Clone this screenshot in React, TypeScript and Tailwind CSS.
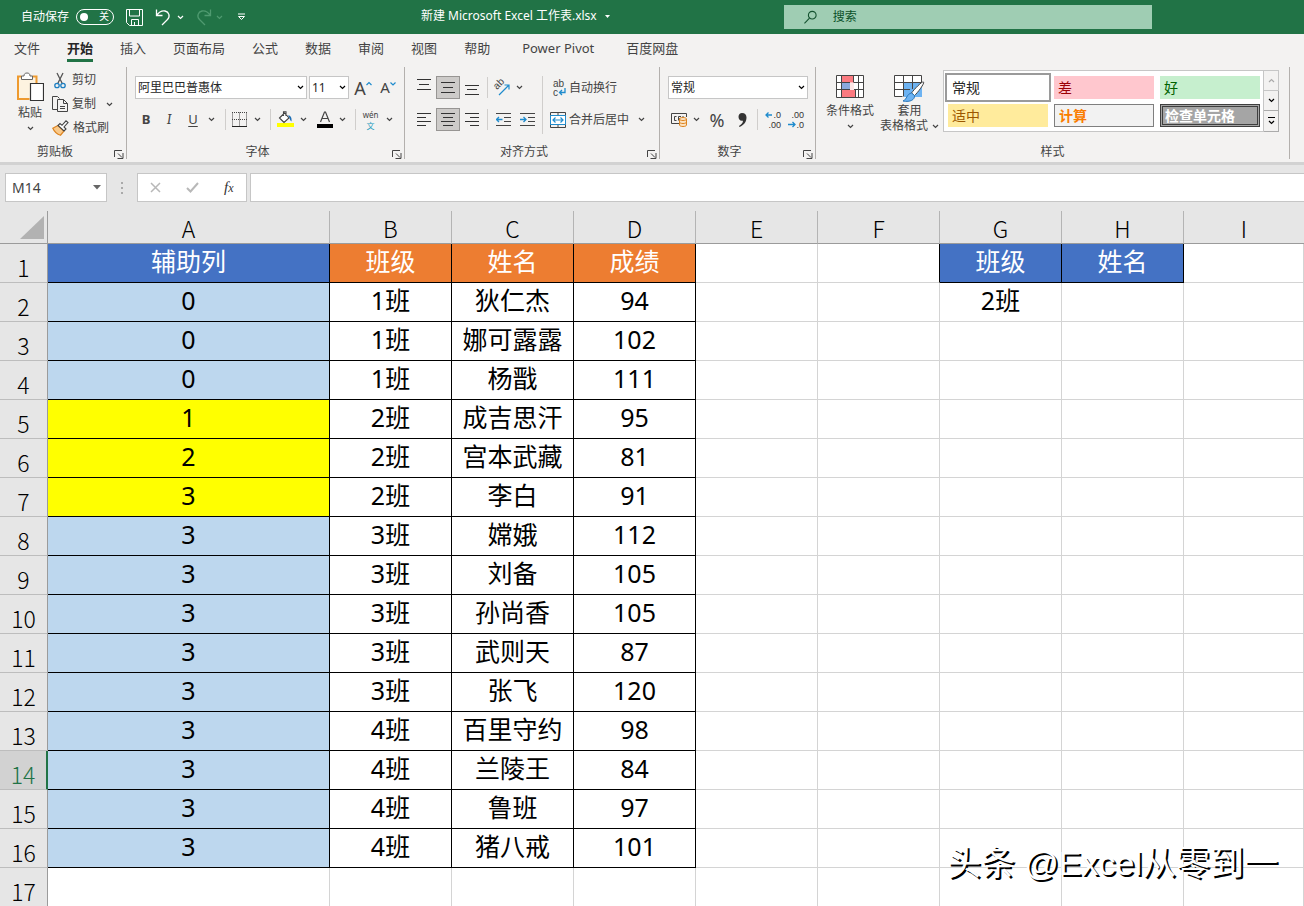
import type { ReactNode } from "react";

type CellStyle = "blue" | "orange" | "light" | "yellow" | "boxed" | "plain";

const COLUMNS = ["A", "B", "C", "D", "E", "F", "G", "H", "I"];

const TABS = [
	"文件",
	"开始",
	"插入",
	"页面布局",
	"公式",
	"数据",
	"审阅",
	"视图",
	"帮助",
	"Power Pivot",
	"百度网盘",
];

const RECORDS: [number, string, string, number][] = [
	[0, "1班", "狄仁杰", 94],
	[0, "1班", "娜可露露", 102],
	[0, "1班", "杨戬", 111],
	[1, "2班", "成吉思汗", 95],
	[2, "2班", "宫本武藏", 81],
	[3, "2班", "李白", 91],
	[3, "3班", "嫦娥", 112],
	[3, "3班", "刘备", 105],
	[3, "3班", "孙尚香", 105],
	[3, "3班", "武则天", 87],
	[3, "3班", "张飞", 120],
	[3, "4班", "百里守约", 98],
	[3, "4班", "兰陵王", 84],
	[3, "4班", "鲁班", 97],
	[3, "4班", "猪八戒", 101],
];

const CELL_CLASSES: Record<CellStyle, string> = {
	blue: "border-black bg-[#4472c4] text-white",
	orange: "border-black bg-[#ed7d31] text-white",
	light: "border-black bg-[#bdd7ee]",
	yellow: "border-black bg-[#ffff00]",
	boxed: "border-black",
	plain: "border-[#d4d4d4]",
};

function Chevron({ className = "text-[#444]" }: { className?: string }) {
	return (
		<svg width="7" height="5" viewBox="0 0 7 5" fill="none" className={className} aria-hidden="true">
			<path d="M1 1l2.5 2.5L6 1" stroke="currentColor" strokeWidth="1.2" />
		</svg>
	);
}

function Tool({
	label,
	className,
	children,
}: {
	label: string;
	className: string;
	children: ReactNode;
}) {
	return (
		<button
			type="button"
			aria-label={label}
			className={`flex h-[23px] shrink-0 items-center justify-center ${className}`}
		>
			{children}
		</button>
	);
}

function Divider({ className = "h-[21px]" }: { className?: string }) {
	return <span className={`w-px shrink-0 bg-[#d0cecc] ${className}`} />;
}

function Combo({ label, value, className }: { label: string; value: string; className: string }) {
	return (
		<span className={`relative h-[23px] ${className}`}>
			<select
				aria-label={label}
				defaultValue={value}
				className="block h-full w-full appearance-none border border-[#c6c6c6] bg-white px-0.5 text-xs text-[#262626]"
			>
				<option>{value}</option>
			</select>
			<span className="pointer-events-none absolute inset-y-0 right-[3px] flex items-center">
				<Chevron className="text-black" />
			</span>
		</span>
	);
}

function Group({
	title,
	className,
	launcher = true,
	children,
}: {
	title: string;
	className: string;
	launcher?: boolean;
	children: ReactNode;
}) {
	return (
		<section className={`flex h-[92px] shrink-0 flex-col border-r border-[#b3b0ad] ${className}`}>
			<div className="h-[77px]">{children}</div>
			<div className="relative flex h-[15px] items-center justify-center text-xs">
				<span className={launcher ? "pr-4" : ""}>{title}</span>
				{launcher && (
					<button type="button" aria-label={`${title}设置`} className="absolute right-0.5 bottom-0">
						<svg width="10" height="10" viewBox="0 0 10 10" fill="none" stroke="#444">
							<path d="M.5 8V1.500H8M4 4.500l4 4M9 4v5.500H3.500" />
						</svg>
					</button>
				)}
			</div>
		</section>
	);
}

// Ruled lines; the short ones are placed by `kind`
function AlignIcon({ kind }: { kind: "top" | "middle" | "bottom" | "left" | "center" | "right" }) {
	const paths = {
		top: "M0 .500h14M2 5.500h10M0 10.500h14",
		middle: "M0 3.500h14M2 8.500h10M0 13.500h14",
		bottom: "M0 6.500h14M2 10.500h10M0 15.500h14",
		left: "M0 2.500h14M0 6.500h9M0 10.500h14M0 14.500h9",
		center: "M0 2.500h14M2 6.500h10M0 10.500h14M2 14.500h10",
		right: "M0 2.500h14M5 6.500h9M0 10.500h14M5 14.500h9",
	};
	return (
		<svg width="14" height="17" viewBox="0 0 14 17" stroke="#333" fill="none">
			<path d={paths[kind]} />
		</svg>
	);
}

function IndentIcon({ increase }: { increase?: boolean }) {
	return (
		<svg width="15" height="15" viewBox="0 0 15 15" fill="none">
			<path d="M0 1.500h15M8 5.500h7M8 9.500h7M0 13.500h15" stroke="#444" />
			<path
				d={increase ? "M0 7.500h6M3.500 5L6 7.500 3.500 10" : "M.5 7.500h6M3 5L.5 7.500 3 10"}
				stroke="#1e8bcd"
				strokeWidth="1.300"
			/>
		</svg>
	);
}

function DecimalIcon({ increase }: { increase?: boolean }) {
	return (
		<svg width="17" height="18" viewBox="0 0 17 18" className="overflow-visible">
			<g fill="#333" fontFamily="Liberation Sans" fontSize="9">
				<text x="16" y="7" textAnchor="end">
					{increase ? ".0" : ".00"}
				</text>
				<text x="16" y="17" textAnchor="end">
					{increase ? ".00" : ".0"}
				</text>
			</g>
			<path
				d={increase ? "M7 4H1M3.500 1.500L1 4l2.500 2.500" : "M0 13.500h7M4.500 11L7 13.500 4.500 16"}
				stroke="#1e8bcd"
				strokeWidth="1.300"
				fill="none"
			/>
		</svg>
	);
}

function TitleBar() {
	return (
		<header className="flex h-[34px] items-center bg-[#217346] text-xs text-white">
			<div className="flex flex-1 items-center pl-[21px]">
				<label className="flex items-center gap-[7px]">
					自动保存
					<span className="flex h-4 w-[38px] items-center justify-between rounded-full border border-white pr-1 pl-[3px] text-[10px]">
						<input type="checkbox" className="h-2 w-2 appearance-none rounded-full bg-white" />
						关
					</span>
				</label>
				<button type="button" aria-label="保存" className="ml-3">
					<svg width="17" height="17" viewBox="0 0 17 17" fill="none" stroke="#fff">
						<path d="M.5.5h16v16h-13l-3-3zM3.500.5v6.500h10V.5M5.500 16.500v-6h7v6M8.500 13v3.500" />
					</svg>
				</button>
				<button type="button" aria-label="撤消" className="ml-3 flex items-center gap-[6px]">
					<svg width="16" height="18" viewBox="0 0 16 18" fill="none" stroke="#fff" strokeWidth="1.300">
						<path d="M1.500 1.500v6h6M1.500 7.500C4 4 7 2.500 10 3c4 .8 5.500 5.500 2.500 8.500L7 17" />
					</svg>
					<Chevron className="text-white" />
				</button>
				<button type="button" aria-label="恢复" className="ml-3 flex items-center gap-1">
					<svg width="16" height="18" viewBox="0 0 16 18" fill="none" stroke="#4f9a70" strokeWidth="1.300">
						<path d="M14.500 1.500v6h-6M14.500 7.500C12 4 9 2.500 6 3 2 3.800.5 8.500 3.500 11.500L9 17" />
					</svg>
					<Chevron className="text-[#4f9a70]" />
				</button>
				<button type="button" aria-label="自定义快速访问工具栏" className="ml-[14px]">
					<svg width="9" height="8" viewBox="0 0 9 8" fill="none" stroke="#fff">
						<path d="M1 1h7M1.500 3.500h6l-3 3z" />
					</svg>
				</button>
			</div>
			<div className="flex w-[363px] items-center gap-2 pb-0.5">
				<h1>新建 Microsoft Excel 工作表.xlsx</h1>
				<svg width="5" height="3" viewBox="0 0 5 3" fill="#fff" aria-hidden="true">
					<path d="M0 0h5L2.500 3z" />
				</svg>
			</div>
			<label className="mr-[152px] flex h-6 w-[368px] items-center gap-4 bg-[#9fcdb3] pl-5">
				<svg width="14" height="15" viewBox="0 0 14 15" fill="none" stroke="#14522f" strokeWidth="1.200">
					<circle cx="9" cy="5" r="4.200" />
					<path d="M6 8.200L.5 14" />
				</svg>
				<input
					type="search"
					aria-label="搜索"
					placeholder="搜索"
					className="w-full bg-transparent outline-none placeholder:text-[#0b5129]"
				/>
			</label>
		</header>
	);
}

function TabBar() {
	return (
		<nav className="flex h-[33px] gap-[27px] pl-[14px] text-[13px]">
			{TABS.map((tab) => (
				<button
					key={tab}
					type="button"
					className={`h-7 border-b-3 pt-1 whitespace-nowrap ${
						tab === "开始" ? "border-[#217346] font-bold text-[#262626]" : "border-transparent"
					} ${tab === "Power Pivot" ? "px-[5px]" : ""}`}
				>
					{tab}
				</button>
			))}
		</nav>
	);
}

function ClipboardGroup() {
	return (
		<Group title="剪贴板" className="w-[127px]">
			<div className="flex pt-px">
				<button type="button" className="flex w-[52px] flex-col items-center pt-1 pl-2 text-xs">
					<svg width="28" height="32" viewBox="0 0 28 32" fill="none">
						<path d="M3 6h18v7h-6v14H3z" fill="#fdf3e0" />
						<path d="M5.500 4.500H2v22.500h11.500M16.500 4.500h4V11" stroke="#ee9a2f" strokeWidth="2" />
						<path d="M5.500 7.500V4H8C8 2 9 1 11 1s3 1 3 3h2.500v3.500z" fill="#fff" stroke="#666" />
						<path d="M14.500 11.500h13v17h-13z" fill="#fff" stroke="#333" strokeWidth="1.200" />
					</svg>
					<span className="leading-[18px]">粘贴</span>
					<span className="pt-1">
						<Chevron />
					</span>
				</button>
				<div className="text-xs">
					<button type="button" className="flex h-6 items-center gap-1">
						<svg width="16" height="17" viewBox="0 0 16 17" fill="none">
							<path d="M5 1l5.500 11M11 1L5.500 12" stroke="#555" strokeWidth="1.300" />
							<circle cx="5" cy="13.500" r="2.200" stroke="#1e7fc2" strokeWidth="1.300" />
							<circle cx="11" cy="13.500" r="2.200" stroke="#1e7fc2" strokeWidth="1.300" />
						</svg>
						剪切
					</button>
					<button type="button" className="flex h-6 items-center gap-1">
						<svg width="16" height="16" viewBox="0 0 16 16" fill="none" stroke="#444">
							<path d="M5 13.500H.5V.5h5l2 2M5.500 3.500h6l4 4v8h-10zM11.500 3.500v4h4M8 10.500h5M8 12.500h5" />
						</svg>
						复制
						<span className="pl-1.5">
							<Chevron />
						</span>
					</button>
					<button type="button" className="flex h-6 items-center gap-1">
						<svg width="17" height="16" viewBox="0 0 17 16" fill="none">
							<path
								d="M.8 8.200L6 5.500l6 5.500-3.500 4.200C4.500 14 2.500 12 .8 8.200z"
								fill="#f9c98a"
								stroke="#dd8420"
								strokeWidth="1.200"
							/>
							<path
								d="M6 5.500L8 3.500l2 1.800 4-4.500L16 2.500 12 7l2 2-2 2z"
								fill="#fff"
								stroke="#444"
								strokeWidth="1.100"
							/>
						</svg>
						格式刷
					</button>
				</div>
			</div>
		</Group>
	);
}

function FontGroup() {
	return (
		<Group title="字体" className="w-[278px]">
			<div className="flex flex-col gap-[9px] pt-[9px] pl-2">
				<div className="flex">
					<Combo label="字体" value="阿里巴巴普惠体" className="w-[172px]" />
					<Combo label="字号" value="11" className="ml-0.5 w-10" />
					<Tool label="增大字号" className="w-7 text-lg">
						A
						<svg width="6" height="14" viewBox="0 0 6 14" fill="none" stroke="#1e8bcd" strokeWidth="1.200">
							<path d="M.5 4L3 1.500 5.500 4" />
						</svg>
					</Tool>
					<Tool label="减小字号" className="w-[22px] text-[15px]">
						A
						<svg width="6" height="14" viewBox="0 0 6 14" fill="none" stroke="#1e8bcd" strokeWidth="1.200">
							<path d="M.5 1.500L3 4l2.500-2.500" />
						</svg>
					</Tool>
				</div>
				<div className="flex items-center">
					<Tool label="加粗" className="w-[22px] text-[13px] font-bold">
						B
					</Tool>
					<Tool label="倾斜" className="w-6 font-serif text-sm italic">
						I
					</Tool>
					<Tool label="下划线" className="w-6 text-[13px] underline underline-offset-2">
						U
					</Tool>
					<Tool label="下划线选项" className="w-3">
						<Chevron />
					</Tool>
					<span className="w-2" />
					<Divider />
					<Tool label="边框" className="w-[27px]">
						<svg width="16" height="16" viewBox="0 0 16 16" fill="none">
							<path
								d="M.5.5v13M7.500.5v13M14.500.5v13M0 .5h15M0 7.500h15"
								stroke="#444"
								strokeDasharray="1 1"
							/>
							<path d="M0 14.500h15" stroke="#222" />
						</svg>
					</Tool>
					<Tool label="边框选项" className="w-2">
						<Chevron />
					</Tool>
					<span className="w-[9px]" />
					<Divider />
					<Tool label="填充颜色" className="w-7">
						<svg width="17" height="17" viewBox="0 0 17 17" fill="none">
							<path d="M0 12h17v4H0z" fill="#ff0" />
							<path
								d="M2.500 7L7.500 2l4.500 5-5 4.500zM6.500 5V.800h2.500V5"
								fill="#fff"
								stroke="#444"
								strokeWidth="1.100"
							/>
							<path d="M11 4.500c2.500-.5 4 2 3.500 6-1.200-1-1.700-2-2-3.500z" fill="#1e6fb5" />
						</svg>
					</Tool>
					<Tool label="填充颜色选项" className="w-2">
						<Chevron />
					</Tool>
					<span className="w-1" />
					<Tool label="字体颜色" className="w-[27px]">
						<svg width="16" height="18" viewBox="0 0 16 18">
							<path
								d="M3.500 11L7.500 1h1l4 10M5 7.500h6"
								fill="none"
								stroke="#444"
								strokeWidth="1.200"
							/>
							<path d="M0 13h16v4H0z" fill="#000" />
						</svg>
					</Tool>
					<Tool label="字体颜色选项" className="w-2">
						<Chevron />
					</Tool>
					<span className="w-[9px]" />
					<Divider />
					<Tool label="拼音" className="w-[29px] flex-col">
						<span className="text-[8px] leading-[11px]">wén</span>
						<span className="text-[8px] leading-[11px] text-[#1e9bbd]">文</span>
					</Tool>
					<Tool label="拼音选项" className="w-2">
						<Chevron />
					</Tool>
				</div>
			</div>
		</Group>
	);
}

function AlignmentGroup() {
	return (
		<Group title="对齐方式" className="w-[255px]">
			<div className="flex items-start pt-[9px] pl-[7px]">
				<div className="flex flex-col gap-[9px]">
					<div className="flex items-center">
						<Tool label="顶端对齐" className="w-6">
							<AlignIcon kind="top" />
						</Tool>
						<Tool label="垂直居中" className="w-6 border border-[#979593] bg-[#cdcbc9]">
							<AlignIcon kind="middle" />
						</Tool>
						<Tool label="底端对齐" className="w-6">
							<AlignIcon kind="bottom" />
						</Tool>
						<span className="w-[3px]" />
						<Divider />
						<Tool label="方向" className="w-7">
							<svg width="18" height="17" viewBox="0 0 18 17" fill="none" className="overflow-visible">
								<text
									transform="translate(4 11) rotate(-45)"
									fill="#444"
									fontFamily="Liberation Sans"
									fontSize="10"
								>
									ab
								</text>
								<path d="M6 16L16 6M11.500 6H16v4.500" stroke="#1e8bcd" strokeWidth="1.200" />
							</svg>
						</Tool>
						<Chevron />
					</div>
					<div className="flex items-center">
						<Tool label="左对齐" className="w-6">
							<AlignIcon kind="left" />
						</Tool>
						<Tool label="居中" className="w-6 border border-[#979593] bg-[#cdcbc9]">
							<AlignIcon kind="center" />
						</Tool>
						<Tool label="右对齐" className="w-6">
							<AlignIcon kind="right" />
						</Tool>
						<span className="w-[3px]" />
						<Divider />
						<Tool label="减少缩进量" className="w-[30px]">
							<IndentIcon />
						</Tool>
						<Tool label="增加缩进量" className="w-[18px]">
							<IndentIcon increase />
						</Tool>
					</div>
				</div>
				<Divider className="ml-auto h-[58px]" />
				<div className="flex w-[116px] flex-col gap-[9px] pl-[7px] text-xs">
					<button type="button" className="flex h-[23px] items-center gap-[3px]">
						<svg width="16" height="18" viewBox="0 0 16 18" fill="none" className="overflow-visible">
							<g fill="#444" fontFamily="Liberation Sans" fontSize="10">
								<text x="3" y="8">
									ab
								</text>
								<text x="3" y="17">
									c
								</text>
							</g>
							<path d="M15 9v4.500H9.500M12 11l-2.500 2.500L12 16" stroke="#1e8bcd" strokeWidth="1.300" />
						</svg>
						自动换行
					</button>
					<button type="button" className="flex h-[23px] items-center gap-[3px] whitespace-nowrap">
						<svg width="16" height="16" viewBox="0 0 16 16" fill="none">
							<path d="M.5.500h15v15H.5zM8 .5V4M8 12v3.500" stroke="#444" />
							<path d="M.5 3.500h15v9H.5z" fill="#fff" stroke="#1e8bcd" />
							<path
								d="M3 8h10M5.500 5.500L3 8l2.500 2.500M10.500 5.500L13 8l-2.500 2.500"
								stroke="#1e8bcd"
								strokeWidth="1.200"
							/>
						</svg>
						合并后居中
						<span className="pl-1.5">
							<Chevron />
						</span>
					</button>
				</div>
			</div>
		</Group>
	);
}

function NumberGroup() {
	return (
		<Group title="数字" className="w-[156px]">
			<div className="flex flex-col gap-[9px] pt-[9px] pl-2">
				<Combo label="数字格式" value="常规" className="w-[140px]" />
				<div className="flex items-center">
					<Tool label="会计数字格式" className="w-[23px]">
						<svg width="17" height="15" viewBox="0 0 17 15" fill="none">
							<path d="M8 11.500H.5v-10h15V5" stroke="#444" />
							<path d="M5.500 4.500h-2v4h2M10 4.500H7.500v4M7.500 6.500h2M12 4v3" stroke="#444" />
							<path
								d="M8.500 7v6c0 2 7 2 7 0V7c0-2-7-2-7 0c0 2 7 2 7 0M8.500 10c0 2 7 2 7 0"
								fill="#fbe3c4"
								stroke="#dd8420"
							/>
						</svg>
					</Tool>
					<Tool label="会计数字格式选项" className="w-2.5">
						<Chevron />
					</Tool>
					<Tool label="百分比样式" className="w-8 text-lg">
						%
					</Tool>
					<Tool label="千位分隔样式" className="w-[18px]">
						<svg width="9" height="14" viewBox="0 0 9 14" fill="#333">
							<path d="M4 0c3 0 4.500 2 4.500 4.500C8.500 9 6 12 1.500 14L1 13c2.500-1.500 4-3.500 4-5.300C2 8.300.5 6.300.5 3.800.5 1.600 2 0 4 0z" />
						</svg>
					</Tool>
					<span className="w-1.5" />
					<Divider />
					<Tool label="增加小数位数" className="w-[30px]">
						<DecimalIcon increase />
					</Tool>
					<Tool label="减少小数位数" className="w-[17px]">
						<DecimalIcon />
					</Tool>
				</div>
			</div>
		</Group>
	);
}

function StylesGroup() {
	return (
		<Group title="样式" className="w-[474px]" launcher={false}>
			<div className="flex pt-[3px]">
				<button type="button" className="flex w-16 flex-col items-center pt-[5px] pl-1 text-xs">
					<svg width="28" height="23" viewBox="0 0 28 23" fill="none">
						<path d="M.5.5h27v22H.5z" fill="#fff" />
						<path d="M6 .5h12v7H6zM6 15h14v7.500H6z" fill="#fb7a80" />
						<path d="M6 8h8v7H6z" fill="#8aa9dc" />
						<path d="M14 8h4v7h-4z" fill="#fde6e6" />
						<path
							d="M.5.5h27v22H.5zM5.500.5v22M17.500.5v7M19.500 15v7.500M22.500.5v22M0 7.500h14M18 7.500h10M0 14.500h14M18 14.500h10"
							stroke="#444"
						/>
					</svg>
					<span className="pt-1 leading-[18px] whitespace-nowrap">条件格式</span>
					<span className="pt-1">
						<Chevron />
					</span>
				</button>
				<button type="button" className="flex w-[63px] flex-col items-center pt-[5px] pr-1 text-xs">
					<svg width="31" height="27" viewBox="0 0 31 27" fill="none">
						<path d="M.5.5h27v21H.5z" fill="#fff" />
						<path d="M10 8h18v14H10z" fill="#6db3f2" />
						<path d="M27.500 8V.500H.5v21h8M9.500.5v21M18.500.5V14M0 7.500h28M0 14.500h16" stroke="#444" />
						<path
							d="M29.500 7c1.500 1-6 11-9 13.500L17.500 18C20 14.500 28 6 29.500 7z"
							fill="#fff"
							stroke="#444"
						/>
						<path
							d="M17.500 18l3 2.500c.5 4-4 7-11.500 5.500 4-1.500 3.500-7 8.500-8z"
							fill="#6db3f2"
							stroke="#2a76b8"
						/>
					</svg>
					<span className="leading-[18px]">套用</span>
					<span className="flex items-center gap-1 leading-3 whitespace-nowrap">
						表格格式
						<Chevron />
					</span>
				</button>
				<div className="flex">
					<div className="grid h-[62px] w-[321px] grid-cols-[100px_100px_100px] grid-rows-[23px_23px] gap-x-1.5 gap-y-[5px] border border-[#c6c6c6] bg-white pt-[5px] pl-1 text-sm leading-[22px]">
						<button
							type="button"
							className="bg-white pl-1 text-left text-[#262626] outline-2 outline-offset-1 outline-[#9a9a9a]"
						>
							常规
						</button>
						<button type="button" className="bg-[#ffc7ce] pl-1 text-left text-[#9c0006]">
							差
						</button>
						<button type="button" className="bg-[#c6efce] pl-1 text-left text-[#006100]">
							好
						</button>
						<button type="button" className="bg-[#ffeb9c] pl-1 text-left text-[#9c5700]">
							适中
						</button>
						<button
							type="button"
							className="border border-[#7f7f7f] bg-[#f2f2f2] pl-1 text-left leading-5 font-bold text-[#fa7d00]"
						>
							计算
						</button>
						<button
							type="button"
							className="border-3 border-double border-[#3f3f3f] bg-[#a5a5a5] pl-0.5 text-left leading-4 font-bold text-white"
						>
							检查单元格
						</button>
					</div>
					<div className="flex w-[15px] flex-col">
						<button
							type="button"
							aria-label="上一行"
							className="flex h-[21px] items-center justify-center border border-l-0 border-[#c6c6c6]"
						>
							<span className="rotate-180">
								<Chevron className="text-[#aaa]" />
							</span>
						</button>
						<button
							type="button"
							aria-label="下一行"
							className="flex h-5 items-center justify-center border-r border-b border-[#ababab]"
						>
							<Chevron className="text-black" />
						</button>
						<button
							type="button"
							aria-label="其他样式"
							className="flex h-[21px] flex-col items-center justify-center gap-0.5 border-r border-b border-[#ababab]"
						>
							<span className="h-px w-[7px] bg-black" />
							<Chevron className="text-black" />
						</button>
					</div>
				</div>
			</div>
		</Group>
	);
}

function FormulaBar() {
	return (
		<div className="flex h-[46px] items-start bg-[#e6e6e6] pt-2 pl-[5px]">
			<div className="relative h-[29px] w-[102px]">
				<input
					aria-label="名称框"
					defaultValue="M14"
					className="h-full w-full border border-[#c6c6c6] bg-white pl-1.5 text-sm text-[#444]"
				/>
				<svg
					width="8"
					height="5"
					viewBox="0 0 8 5"
					fill="#666"
					className="pointer-events-none absolute top-3 right-1.5"
				>
					<path d="M0 0h8L4 4.500z" />
				</svg>
			</div>
			<div className="flex h-[29px] w-[30px] flex-col items-center justify-center gap-[3px]">
				<span className="h-0.5 w-0.5 bg-[#aaa]" />
				<span className="h-0.5 w-0.5 bg-[#aaa]" />
				<span className="h-0.5 w-0.5 bg-[#aaa]" />
			</div>
			<div className="flex h-[29px] w-[110px] items-center justify-around border border-[#c6c6c6] bg-white">
				<button type="button" aria-label="取消">
					<svg width="11" height="11" viewBox="0 0 11 11" stroke="#b8b8b8" strokeWidth="1.500">
						<path d="M1 1l9 9M10 1l-9 9" />
					</svg>
				</button>
				<button type="button" aria-label="输入">
					<svg width="13" height="11" viewBox="0 0 13 11" fill="none" stroke="#b8b8b8" strokeWidth="2">
						<path d="M1 6l3.500 3.500L12 1" />
					</svg>
				</button>
				<button
					type="button"
					aria-label="插入函数"
					className="font-['Liberation_Serif',serif] text-[15px] leading-4 text-[#333] italic"
				>
					f<span className="text-xs">x</span>
				</button>
			</div>
			<input
				aria-label="编辑栏"
				className="ml-[3px] h-[29px] min-w-0 flex-1 border border-r-0 border-[#c6c6c6] bg-white px-2 text-sm"
			/>
		</div>
	);
}

function Cell({ kind = "plain", edge, children }: { kind?: CellStyle; edge?: boolean; children?: ReactNode }) {
	return (
		<td
			className={`border-r border-b p-0 pb-[3px] text-center ${CELL_CLASSES[kind]} ${
				edge ? "border-r-black" : ""
			}`}
		>
			{children}
		</td>
	);
}

function RowHeader({ row }: { row: number }) {
	return (
		<th
			scope="row"
			className={`h-[39px] border-b border-b-[#bdbdbd] p-0 pt-2 font-['Noto_Sans_CJK_SC',sans-serif] text-[23px] leading-[30px] font-light ${
				row === 14
					? "border-r-2 border-r-[#217346] bg-[#d2d2d2] text-[#217346]"
					: "border-r border-r-[#9b9b9b] bg-[#e6e6e6]"
			}`}
		>
			{row}
		</th>
	);
}

function Sheet() {
	return (
		<table className="w-full table-fixed border-separate border-spacing-0 text-[25px] leading-[35px] text-black">
			<colgroup>
				<col className="w-12" />
				<col className="w-[282px]" />
				{COLUMNS.slice(1, 8).map((name) => (
					<col key={name} className="w-[122px]" />
				))}
				<col />
			</colgroup>
			<thead>
				<tr className="bg-[#e6e6e6] font-['Noto_Sans_CJK_SC',sans-serif]">
					<th className="h-[33px] border-r border-b border-[#9b9b9b] p-0">
						<button type="button" aria-label="全选" className="flex w-full justify-end pr-[3px]">
							<svg width="24" height="23" viewBox="0 0 24 23" fill="#b2b2b2">
								<path d="M24 0v23H0z" />
							</svg>
						</button>
					</th>
					{COLUMNS.map((name) => (
						<th
							key={name}
							scope="col"
							className="h-[33px] border-r border-b border-r-[#b4b4b4] border-b-[#9b9b9b] p-0 pt-0.5 text-[23px] leading-7 font-light last:border-r-0"
						>
							{name}
						</th>
					))}
				</tr>
			</thead>
			<tbody>
				<tr>
					<RowHeader row={1} />
					<Cell kind="blue">辅助列</Cell>
					<Cell kind="orange">班级</Cell>
					<Cell kind="orange">姓名</Cell>
					<Cell kind="orange">成绩</Cell>
					<Cell />
					<Cell edge />
					<Cell kind="blue">班级</Cell>
					<Cell kind="blue">姓名</Cell>
					<Cell />
				</tr>
				{RECORDS.map(([count, group, name, score], i) => (
					<tr key={name}>
						<RowHeader row={i + 2} />
						<Cell kind={group === "2班" ? "yellow" : "light"}>{count}</Cell>
						<Cell kind="boxed">{group}</Cell>
						<Cell kind="boxed">{name}</Cell>
						<Cell kind="boxed">{score}</Cell>
						<Cell />
						<Cell />
						<Cell>{i === 0 ? "2班" : null}</Cell>
						<Cell />
						<Cell />
					</tr>
				))}
				<tr>
					<RowHeader row={17} />
					{COLUMNS.map((name) => (
						<Cell key={name} />
					))}
				</tr>
			</tbody>
		</table>
	);
}

export default function App() {
	return (
		<div className="relative overflow-hidden bg-white font-['Noto_Sans','Noto_Sans_CJK_SC',sans-serif] text-[#444]">
			<TitleBar />
			<div className="bg-[#f3f2f1]">
				<TabBar />
				<div className="flex h-[95px]">
					<ClipboardGroup />
					<FontGroup />
					<AlignmentGroup />
					<NumberGroup />
					<StylesGroup />
				</div>
			</div>
			<div className="h-[3px] bg-[#d2d2d2]" />
			<FormulaBar />
			<Sheet />

			{/* Author watermark */}
			<p className="pointer-events-none absolute right-[26px] bottom-5 font-['Liberation_Sans','Noto_Sans_CJK_SC',sans-serif] text-[34px] leading-[48px] whitespace-nowrap text-white [text-shadow:2px_2px_0_#000]">
				头条 @Excel从零到一
			</p>
		</div>
	);
}
